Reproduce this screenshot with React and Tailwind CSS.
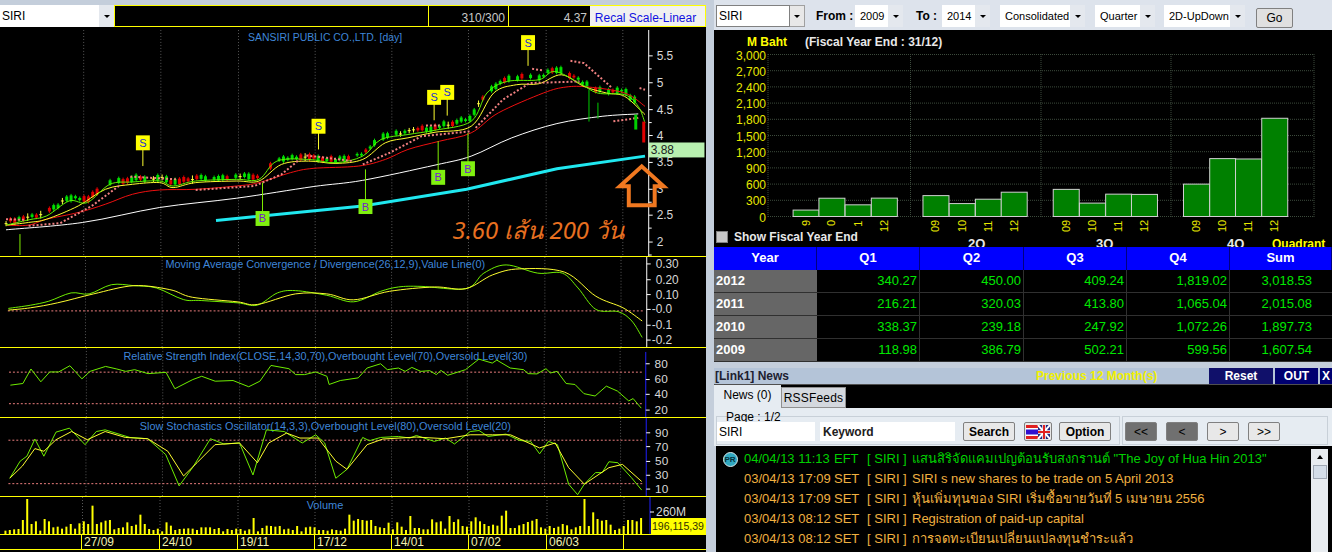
import React from 'react';

// points below were read off zoomed crops: x scale 2.205, y scale 3
const zx = (x) => x / 2.205;
const toPts = (pts, top) => pts.map(([x, y]) => `${zx(x).toFixed(1)},${(y / 3 + top).toFixed(1)}`).join(' ');

// catmull-rom, the moving averages are soft curves in the reference
const toPath = (pts, top) => {
    const p = pts.map(([x, y]) => [zx(x), y / 3 + top]);
    let d = `M${p[0][0].toFixed(1)} ${p[0][1].toFixed(1)}`;
    for (let i = 0; i < p.length - 1; i++) {
        const a = p[Math.max(i - 1, 0)];
        const b = p[i];
        const c = p[i + 1];
        const e = p[Math.min(i + 2, p.length - 1)];
        const c1x = b[0] + (c[0] - a[0]) / 6;
        const c1y = b[1] + (c[1] - a[1]) / 6;
        const c2x = c[0] - (e[0] - b[0]) / 6;
        const c2y = c[1] - (e[1] - b[1]) / 6;
        d += ` C${c1x.toFixed(1)} ${c1y.toFixed(1)} ${c2x.toFixed(1)} ${c2y.toFixed(1)} ${c[0].toFixed(1)} ${c[1].toFixed(1)}`;
    }
    return d;
};

const interp = (pts, x) => {
    for (let i = 1; i < pts.length; i++) {
        if (x <= pts[i][0]) {
            const [x0, y0] = pts[i - 1];
            const [x1, y1] = pts[i];
            return y0 + ((y1 - y0) * (x - x0)) / (x1 - x0);
        }
    }
    return pts[pts.length - 1][1];
};

const RED = [[10,678],[60,678],[100,660],[170,640],[230,615],[290,585],[350,572],[430,570],[520,560],[570,550],[640,520],[690,507],[790,500],[850,480],[900,450],[970,425],[1040,400],[1100,340],[1200,280],[1250,262],[1300,262],[1380,280],[1425,320]];
const YELLOW = [[10,678],[60,670],[100,660],[170,620],[230,570],[290,555],[350,550],[380,565],[430,550],[520,545],[570,545],[620,495],[680,485],[740,492],[800,480],[850,430],[900,415],[960,398],[1040,380],[1090,280],[1140,255],[1190,252],[1240,225],[1290,260],[1340,280],[1380,290],[1425,345]];
const GREEN = [[10,678],[60,662],[100,650],[150,605],[190,610],[240,555],[290,548],[350,545],[380,560],[430,545],[520,540],[570,540],[610,485],[680,480],[740,490],[800,470],[840,420],[900,405],[960,392],[1040,365],[1075,280],[1120,245],[1190,240],[1225,215],[1280,250],[1320,280],[1380,285],[1410,320],[1425,370]];
const WHITE = [[10,692],[180,670],[350,625],[520,597],[690,562],[800,543],[960,497],[1040,470],[1130,415],[1230,372],[1330,350],[1410,343]];
const CYAN = [[475,664],[800,620],[1030,570],[1230,508],[1425,470]];
const SAR = [
    [[10,660],[50,662]],
    [[60,680],[130,672],[200,620],[260,560]],
    [[285,532],[390,540]],
    [[430,572],[560,560],[620,525],[660,480]],
    [[675,468],[780,485]],
    [[800,495],[860,460],[930,410],[1040,395]],
    [[940,378],[970,378]],
    [[1050,385],[1110,300],[1170,250],[1280,245]],
    [[1175,207],[1200,212]],
    [[1260,183],[1290,190],[1350,262]],
    [[1355,365],[1410,355]],
    [[1413,265],[1425,270]],
];

const MACD_G = [[10,162],[60,152],[100,140],[150,115],[190,118],[240,90],[290,93],[340,100],[400,135],[440,138],[520,145],[565,152],[610,115],[650,108],[720,122],[780,142],[840,110],[880,97],[930,95],[1030,102],[1070,55],[1120,30],[1190,55],[1245,55],[1280,100],[1320,165],[1370,172],[1400,200],[1423,250]];
const MACD_Y = [[10,167],[60,160],[120,145],[200,118],[290,93],[370,105],[420,128],[520,142],[565,150],[650,118],[720,118],[780,136],[860,110],[960,97],[1030,102],[1090,60],[1150,42],[1250,52],[1320,125],[1380,160],[1423,200]];
const RSI = [[12,392],[40,387],[58,343],[80,382],[100,352],[120,352],[145,333],[172,373],[190,350],[225,335],[250,343],[270,350],[290,345],[320,357],[360,353],[380,403],[420,375],[440,365],[470,380],[510,378],[545,397],[570,380],[595,332],[635,342],[650,360],[670,360],[695,352],[720,365],[725,390],[750,378],[790,370],[810,340],[840,327],[855,345],[880,340],[895,350],[910,338],[930,350],[950,348],[965,360],[975,347],[990,362],[1030,345],[1060,313],[1090,325],[1100,316],[1130,340],[1160,345],[1170,357],[1190,358],[1210,342],[1220,355],[1235,350],[1255,387],[1275,390],[1295,418],[1320,425],[1345,395],[1370,410],[1395,440],[1405,433],[1423,462]];
const STO_G = [[12,672],[35,620],[50,605],[68,553],[88,605],[115,532],[145,520],[180,570],[205,530],[225,525],[280,548],[320,552],[360,600],[390,695],[420,640],[460,552],[490,568],[525,565],[555,662],[585,525],[625,530],[665,565],[695,540],[715,565],[740,672],[765,645],[800,548],[815,558],[840,548],[880,545],[905,550],[920,542],[960,560],[985,550],[1005,568],[1040,530],[1060,527],[1080,545],[1120,538],[1150,557],[1175,560],[1195,598],[1215,560],[1235,570],[1260,690],[1280,722],[1295,690],[1320,655],[1335,655],[1350,622],[1370,625],[1400,670],[1423,708]];
const STO_Y = [[12,672],[40,635],[68,582],[88,590],[115,555],[150,530],[185,555],[225,530],[270,548],[320,552],[365,590],[400,665],[430,625],[470,570],[525,565],[565,625],[590,565],[630,535],[660,550],[700,550],[740,620],[765,645],[810,570],[845,553],[920,547],[985,552],[1040,540],[1090,540],[1130,540],[1195,580],[1230,565],[1260,640],[1295,690],[1350,640],[1380,630],[1423,682]];

const VOLUME = [10,12,14,15,42,105,30,38,10,45,38,20,22,16,22,30,16,32,38,30,85,30,35,40,42,14,18,20,35,24,28,58,30,15,12,16,8,35,25,12,15,16,17,16,12,20,20,20,15,18,8,15,12,16,15,10,14,48,8,18,25,24,22,24,14,16,12,24,8,20,22,20,12,12,10,14,12,10,16,58,40,45,42,40,42,24,20,18,34,14,35,22,12,54,18,18,14,14,44,35,38,16,54,36,44,24,22,38,50,38,30,24,28,25,55,70,18,18,26,30,36,40,45,20,16,24,18,22,30,26,14,20,24,105,24,65,45,40,42,28,12,16,24,42,42,38,48];

const GRID_X = [82.5, 160, 238, 315, 392, 469, 547, 624];

const SIGNALS_S = [[313, 430, 500], [702, 380, 450], [958, 293, 362], [987, 278, 348], [1166, 128, 198]];
const SIGNALS_B = [[578, 658, 550], [806, 622, 510], [967, 534, 425], [1033, 508, 400]];

const rnd = (i) => {
    const s = Math.sin(i * 12.9898) * 43758.5453;
    return s - Math.floor(s);
};

const Candles = () => {
    const out = [];
    for (let i = 0; i < 146; i++) {
        if (rnd(i + 1100) < 0.12) continue;
        const x = 10 + i * 9.6;
        const mid = interp(GREEN, x) / 3 - 1.5 - rnd(i) * 3;
        const h = 1.5 + rnd(i + 300) * 4.5;
        const kind = rnd(i + 700);
        const px = zx(x);
        const color = kind < 0.55 ? '#00e000' : kind < 0.9 ? '#e00000' : '#ffff40';
        out.push(
            <g key={i}>
                <line x1={px} x2={px} y1={mid - h / 2 - 1.5} y2={mid + h / 2 + 1.5} stroke={color} strokeWidth="1" />
                {kind < 0.9 ? (
                    <rect x={px - 1.5} y={mid - h / 2} width="3" height={h} fill={color} />
                ) : (
                    <line x1={px - 1.5} x2={px + 1.5} y1={mid} y2={mid} stroke={color} />
                )}
            </g>
        );
    }
    return out;
};

const Select = ({ value, className, sunk, pad }) => (
    <div className={`flex items-center h-[22px] shrink-0 ${className}`}>
        <div className={`flex-1 h-full flex items-center bg-white whitespace-nowrap text-black ${pad ? 'pl-[5px] text-[11px]' : 'pl-[2px] text-[12px]'} ${sunk ? 'border border-[#808080]' : ''}`}>{value}</div>
        <div className={`w-[15px] h-full flex items-center justify-center ${sunk ? 'bg-[#e8e8e8] border-y border-r border-[#a0a0a0]' : 'bg-[#e4e8ee]'}`}>
            <div className="w-0 h-0 border-x-[3px] border-x-transparent border-t-[3px] border-t-black" />
        </div>
    </div>
);

const MainChart = () => (
    <svg viewBox="0 27 706 230" className="block w-full h-full">
        {GRID_X.map((x) => (
            <line key={x} x1={x} x2={x} y1="30" y2="257" stroke="#585858" strokeDasharray="1 2" />
        ))}
        <line x1="650" x2="650" y1="30" y2="257" stroke="#ffffff" />
        {[['5.5', 56], ['5', 83], ['4.5', 110], ['4', 136], ['3.5', 163], ['3', 190], ['2.5', 216], ['2', 243]].map(([t, y]) => (
            <g key={t}>
                <line x1="650" x2="654" y1={y} y2={y} stroke="#ffffff" />
                <line x1="650" x2="653" y1={y + 13} y2={y + 13} stroke="#ffffff" />
                <text x="658" y={y + 4} fontSize="12" fill="#d8d8d8">{t}</text>
            </g>
        ))}
        <text x="325" y="41" textAnchor="middle" fontSize="10.5" fill="#3f86d8">SANSIRI PUBLIC CO.,LTD. [day]</text>
        <line x1="18.5" x2="18.5" y1="235" y2="256" stroke="#80f000" />

        <path d={toPath(WHITE, 0)} fill="none" stroke="#ffffff" strokeWidth="1" />
        <Candles />
        <path d={toPath(RED, 0)} fill="none" stroke="#f01010" strokeWidth="1" />
        <path d={toPath(YELLOW, 0)} fill="none" stroke="#ffff30" strokeWidth="1" />
        <path d={toPath(GREEN, 0)} fill="none" stroke="#60f000" strokeWidth="1" />
        <polyline points={toPts(CYAN, 0)} fill="none" stroke="#20e8f0" strokeWidth="3" />
        {SAR.map((s, i) => (
            <polyline key={i} points={toPts(s, 0)} fill="none" stroke="#f08080" strokeWidth="2" strokeDasharray="2 2" />
        ))}
        {/* last sessions drop hard */}
        <rect x="643.5" y="122" width="3" height="21" fill="#e00000" />
        <rect x="635.5" y="115" width="3" height="15" fill="#00d000" />
        <line x1="590" x2="590" y1="90" y2="122" stroke="#00d000" />
        <line x1="599" x2="599" y1="103" y2="119" stroke="#00d000" />

        {SIGNALS_S.map(([x, y, end]) => (
            <g key={x}>
                <line x1={zx(x)} x2={zx(x)} y1={y / 3} y2={end / 3} stroke="#ffff30" />
                <rect x={zx(x) - 7} y={y / 3 - 7.5} width="14" height="15" fill="#ffff00" />
                <text x={zx(x)} y={y / 3 + 4} textAnchor="middle" fontSize="11" fill="#2030d0">S</text>
            </g>
        ))}
        {SIGNALS_B.map(([x, y, start]) => (
            <g key={x}>
                <line x1={zx(x)} x2={zx(x)} y1={start / 3} y2={y / 3} stroke="#80f000" />
                <rect x={zx(x) - 7} y={y / 3 - 7.5} width="14" height="15" fill="#80f010" />
                <text x={zx(x)} y={y / 3 + 4} textAnchor="middle" fontSize="11" fill="#7020d0">B</text>
            </g>
        ))}

        <polygon points="643,167 665,187 656,187 656,206 630,206 630,187 621,187" fill="none" stroke="#f07820" strokeWidth="4" />
        <text x="453" y="240" fontSize="24" fontStyle="italic" fill="#e87020" fontFamily="'Noto Sans','DejaVu Sans',sans-serif">3.60 เส้น 200 วัน</text>

        <rect x="650" y="143" width="56" height="15" fill="#b8f0b0" />
        <text x="652" y="155" fontSize="12" fill="#202020">3.88</text>
    </svg>
);

const MacdChart = () => (
    <svg viewBox="0 257 706 91" className="block w-full h-full">
        {GRID_X.map((x) => (
            <line key={x} x1={x} x2={x} y1="257" y2="348" stroke="#585858" strokeDasharray="1 2" />
        ))}
        <line x1="650" x2="650" y1="257" y2="348" stroke="#ffffff" />
        {[['0.30', 264], ['0.20', 280], ['0.10', 295], ['-0.0', 310], ['-0.1', 326], ['-0.2', 341]].map(([t, y]) => (
            <g key={t}>
                <line x1="650" x2="654" y1={y} y2={y} stroke="#ffffff" />
                <text x={t[0] === '-' ? 655 : 659} y={y + 4} fontSize="12" fill="#d8d8d8">{t}</text>
            </g>
        ))}
        <text x="325" y="268" textAnchor="middle" fontSize="11" fill="#3f86d8">Moving Average Convergence / Divergence(26,12,9),Value Line(0)</text>
        <line x1="4" x2="648" y1="311.5" y2="311.5" stroke="#f08080" strokeDasharray="2 2" />
        <path d={toPath(MACD_G, 255)} fill="none" stroke="#70f000" />
        <path d={toPath(MACD_Y, 255)} fill="none" stroke="#ffff30" />
    </svg>
);

const RsiChart = () => (
    <svg viewBox="0 348 706 70" className="block w-full h-full">
        {GRID_X.map((x) => (
            <line key={x} x1={x} x2={x} y1="348" y2="418" stroke="#585858" strokeDasharray="1 2" />
        ))}
        <line x1="650" x2="650" y1="352" y2="418" stroke="#2020ff" />
        {[['80', 364], ['60', 380], ['40', 395], ['20', 411]].map(([t, y]) => (
            <g key={t}>
                <line x1="650" x2="654" y1={y} y2={y} stroke="#ffffff" />
                <text x="659" y={y + 4} fontSize="12" fill="#d8d8d8">{t}</text>
            </g>
        ))}
        <text x="325" y="360" textAnchor="middle" fontSize="11" fill="#3f86d8">Relative Strength Index(CLOSE,14,30,70),Overbought Level(70),Oversold Level(30)</text>
        <line x1="4" x2="648" y1="372.5" y2="372.5" stroke="#f08080" strokeDasharray="2 2" />
        <line x1="4" x2="648" y1="404.5" y2="404.5" stroke="#f08080" strokeDasharray="2 2" />
        <polyline points={toPts(RSI, 255)} fill="none" stroke="#70f000" />
    </svg>
);

const StochChart = () => (
    <svg viewBox="0 418 706 79" className="block w-full h-full">
        {GRID_X.map((x) => (
            <line key={x} x1={x} x2={x} y1="418" y2="497" stroke="#585858" strokeDasharray="1 2" />
        ))}
        <line x1="650" x2="650" y1="418" y2="497" stroke="#2020ff" />
        {[['90', 433], ['70', 447], ['50', 462], ['30', 476], ['10', 490]].map(([t, y]) => (
            <g key={t}>
                <line x1="650" x2="654" y1={y} y2={y} stroke="#ffffff" />
                <text x="659" y={y + 4} fontSize="12" fill="#d8d8d8">{t}</text>
            </g>
        ))}
        <text x="325" y="430" textAnchor="middle" fontSize="11" textLength="376" fill="#3f86d8">Slow Stochastics Oscillator(14,3,3),Overbought Level(80),Oversold Level(20)</text>
        <line x1="4" x2="648" y1="440.5" y2="440.5" stroke="#f08080" strokeDasharray="2 2" />
        <line x1="4" x2="648" y1="484.5" y2="484.5" stroke="#f08080" strokeDasharray="2 2" />
        <polyline points={toPts(STO_G, 255)} fill="none" stroke="#70f000" />
        <polyline points={toPts(STO_Y, 255)} fill="none" stroke="#ffff30" />
    </svg>
);

const VolumeChart = () => (
    <svg viewBox="0 497 706 37" className="block w-full h-full">
        {GRID_X.map((x) => (
            <line key={x} x1={x} x2={x} y1="497" y2="534" stroke="#585858" strokeDasharray="1 2" />
        ))}
        <line x1="650" x2="650" y1="497" y2="534" stroke="#2020ff" />
        <line x1="650" x2="654" y1="512" y2="512" stroke="#ffffff" />
        <text x="325" y="509" textAnchor="middle" fontSize="11" fill="#3f86d8">Volume</text>
        <text x="656" y="516" fontSize="12" fill="#d8d8d8">260M</text>
        {VOLUME.map((h, i) => (
            <rect key={i} x={zx(12 + i * 9.6) - 1} y={534 - h / 3} width="2" height={h / 3} fill="#ffff00" />
        ))}
        <rect x="651" y="518" width="55" height="16" fill="#ffff00" />
        <text x="652" y="530" fontSize="11" textLength="52" lengthAdjust="spacingAndGlyphs" fill="#303000">196,115,39</text>
    </svg>
);

const DATES = ['27/09', '24/10', '19/11', '17/12', '14/01', '07/02', '06/03'];

const LeftPane = () => (
    <div className="w-[706px] shrink-0 flex flex-col bg-black">
        <div className="h-[27px] shrink-0 flex items-start pt-[5px] bg-[#c4cedb]">
            <Select value="SIRI" className="w-[114px]" />
            <div className="flex-1 h-[22px] flex border border-[#ffff00] bg-black text-[12px] text-[#c8c8c8]">
                <div className="w-[314px] border-r border-[#ffff00]" />
                <div className="w-[80px] border-r border-[#ffff00] flex items-center justify-end pr-[3px] pt-[3px]">310/300</div>
                <div className="w-[81px] flex items-center justify-end pr-[3px] pt-[3px]">4.37</div>
                <div className="flex-1 bg-[#f0f0f0] flex items-center justify-center pt-[3px] pr-[4px] text-[12px] text-[#1010e0]">Recal Scale-Linear</div>
            </div>
        </div>
        <div className="h-[230px] shrink-0 border-b border-[#ffff00]"><MainChart /></div>
        <div className="h-[91px] shrink-0 border-b border-[#ffff00]"><MacdChart /></div>
        <div className="h-[70px] shrink-0 border-b border-[#ffff00]"><RsiChart /></div>
        <div className="h-[79px] shrink-0 border-b border-[#ffff00]"><StochChart /></div>
        <div className="h-[38px] shrink-0 border-b border-[#ffff00]"><VolumeChart /></div>
        <div className="h-[15px] shrink-0 grid grid-cols-[82px_78px_78px_77px_77px_77px_78px_77px] border-b border-[#ffff00] text-[12px] leading-[15px] text-[#f0f0b0]">
            <div className="border-r border-[#ffff00]" />
            {DATES.map((d) => (
                <div key={d} className="border-r border-[#ffff00] pl-[2px]">{d}</div>
            ))}
        </div>
    </div>
);

const BARS = [
    [[208, 118.98], [273, 338.37], [339, 216.21], [405, 340.27]],
    [[535, 386.79], [601, 239.18], [667, 320.03], [732, 450]],
    [[863, 502.21], [929, 247.92], [995, 413.8], [1060, 409.24]],
    [[1191, 599.56], [1257, 1072.26], [1322, 1065.04], [1388, 1819.02]],
];
const rx = (x) => 710 + x / 2.518;
const TICKS = ['3,000', '2,700', '2,400', '2,100', '1,800', '1,500', '1,200', '900', '600', '300', '0'];

const BarChart = () => (
    <svg viewBox="714 30 618 217" className="block w-full h-full">
        <text x="747" y="46" fontSize="12" fontWeight="bold" fill="#ffff00">M Baht</text>
        <text x="805" y="46" fontSize="12" fontWeight="bold" fill="#e8e8e8">(Fiscal Year End : 31/12)</text>
        {TICKS.map((t, i) => {
            const y = 54.5 + i * 16.2;
            return (
                <g key={t}>
                    <line x1="768" x2="1314" y1={y} y2={y} stroke="#3c4a3c" strokeDasharray="1 1" />
                    <text x="766" y={y + 5} textAnchor="end" fontSize="12" fill="#e8e800">{t}</text>
                </g>
            );
        })}
        {[768, 910.5, 1041, 1171, 1314].map((x) => (
            <line key={x} x1={x} x2={x} y1="54" y2="217" stroke="#3c4a3c" strokeDasharray="1 1" />
        ))}
        {BARS.map((group) =>
            group.map(([x, v], i) => {
                const h = (v / 3000) * 162;
                return (
                    <g key={x}>
                        <rect x={rx(x) + 0.5} y={216.5 - h} width="26" height={h} fill="#008000" stroke="#d0d0d0" />
                        <text
                            transform={`translate(${rx(x) + 17},232) rotate(-90)`}
                            fontSize="11"
                            fill="#e8e800"
                        >
                            {['09', '10', '11', '12'][i]}
                        </text>
                    </g>
                );
            })
        )}
        <text x="968" y="248" fontSize="13" fontWeight="bold" fill="#e8e8e8">2Q</text>
        <text x="1096" y="248" fontSize="13" fontWeight="bold" fill="#e8e8e8">3Q</text>
        <text x="1227" y="248" fontSize="13" fontWeight="bold" fill="#e8e8e8">4Q</text>
        <text x="1272" y="248" fontSize="12" fontWeight="bold" fill="#ffff00">Quadrant</text>
    </svg>
);

const TABLE = [
    ['2012', '340.27', '450.00', '409.24', '1,819.02', '3,018.53'],
    ['2011', '216.21', '320.03', '413.80', '1,065.04', '2,015.08'],
    ['2010', '338.37', '239.18', '247.92', '1,072.26', '1,897.73'],
    ['2009', '118.98', '386.79', '502.21', '599.56', '1,607.54'],
];
const COLS = 'grid grid-cols-[103px_103px_104px_103px_103px_102px]';

const FinTable = () => (
    <div className="h-[115px] shrink-0 bg-black">
        <div className={`${COLS} h-[23px] bg-[#0000ff] text-white text-[13px] font-bold leading-[22px] text-center`}>
            {['Year', 'Q1', 'Q2', 'Q3', 'Q4', 'Sum'].map((h) => (
                <div key={h} className="border-r border-[#000080]">{h}</div>
            ))}
        </div>
        {TABLE.map((row) => (
            <div key={row[0]} className={`${COLS} h-[23px] border-b border-[#303030] text-[13px] leading-[22px]`}>
                <div className="bg-[#666666] text-white font-bold pl-[2px]">{row[0]}</div>
                {row.slice(1, 5).map((v, i) => (
                    <div key={i} className="border-r border-[#303030] text-right pr-[2px] text-[#00e800]">{v}</div>
                ))}
                <div className="text-right pr-[20px] text-[#00e800]">{row[5]}</div>
            </div>
        ))}
    </div>
);

const Btn = ({ children, className }) => (
    <button className={`h-[19px] border border-[#808080] rounded-[2px] flex items-center justify-center text-[12px] text-black ${className}`}>
        {children}
    </button>
);

const NEWS = [
    ['04/04/13 11:13', 'EFT', 'แสนสิริจัดแคมเปญต้อนรับสงกรานต์ "The Joy of Hua Hin 2013"', true],
    ['03/04/13 17:09', 'SET', 'SIRI s new shares to be trade on 5 April 2013'],
    ['03/04/13 17:09', 'SET', 'หุ้นเพิ่มทุนของ SIRI เริ่มซื้อขายวันที่ 5 เมษายน 2556'],
    ['03/04/13 08:12', 'SET', 'Registration of paid-up capital'],
    ['03/04/13 08:12', 'SET', 'การจดทะเบียนเปลี่ยนแปลงทุนชำระแล้ว'],
];

const Flag = () => (
    <svg width="24" height="14" viewBox="0 0 24 14">
        <rect width="24" height="14" fill="#ffffff" />
        <rect width="12" height="3" fill="#e02020" />
        <rect y="11" width="12" height="3" fill="#e02020" />
        <rect y="4.5" width="12" height="5" fill="#3010d0" />
        <rect x="12" width="12" height="14" fill="#202880" />
        <path d="M12 0 L24 14 M24 0 L12 14" stroke="#ffffff" strokeWidth="2" />
        <path d="M18 0 V14 M12 7 H24" stroke="#ffffff" strokeWidth="3.5" />
        <path d="M18 0 V14 M12 7 H24" stroke="#e02020" strokeWidth="2" />
    </svg>
);

const NewsPanel = () => (
    <div className="flex-1 flex flex-col min-h-0">
        <div className="h-[17px] shrink-0 flex items-center bg-[#b4c4d8] border-b border-[#505050] pl-[1px] text-[12px] font-bold text-[#202030]">
            <div className="w-[185px] shrink-0">[Link1] News</div>
            <div className="w-[309px] shrink-0 pl-[136px] whitespace-nowrap text-[#f0f000]">Previous 12 Month(s)</div>
            <div className="w-[64px] shrink-0 h-full bg-[#10106a] text-white text-center leading-[16px]">Reset</div>
            <div className="w-[43px] shrink-0 h-full ml-[2px] bg-[#000070] text-white text-center leading-[16px]">OUT</div>
            <div className="w-[12px] shrink-0 h-full ml-[2px] bg-[#000070] text-white text-center leading-[16px]">X</div>
        </div>
        <div className="h-[23px] shrink-0 flex items-end bg-black">
            <div className="w-[67px] h-full bg-[#e6ecf2] text-[12px] text-black text-center leading-[21px]">News (0)</div>
            <div className="w-[65px] h-[21px] bg-[#d4d8de] border border-[#909090] text-[12px] text-black text-center leading-[20px] tracking-[0.2px]">RSSFeeds</div>
        </div>
        <div className="h-[38px] shrink-0 relative flex items-start gap-[5px] bg-[#e6ecf2] pl-[3px] pt-[14px]">
            <div className="absolute left-[2px] top-[8px] w-[404px] h-[29px] border border-[#c8d0d8]" />
            <div className="absolute left-[408px] top-[8px] w-[206px] h-[29px] border border-[#c8d0d8]" />
            <div className="absolute left-[11px] top-[2px] px-[1px] text-[12px] leading-[14px] text-black">Page : 1/2</div>
            <div className="relative w-[98px] h-[19px] bg-white pl-[2px] text-[12px] font-medium leading-[20px] text-black">SIRI</div>
            <div className="relative w-[135px] h-[19px] bg-white pl-[3px] text-[12px] font-bold leading-[20px] text-[#202020]">Keyword</div>
            <Btn className="relative w-[52px] ml-[3px] bg-[#e8e8e8] font-bold">Search</Btn>
            <div className="relative w-[28px] h-[19px] ml-[4px] border border-[#808080] rounded-[2px] flex items-center justify-center bg-[#e8e8e8]"><Flag /></div>
            <Btn className="relative w-[52px] ml-[2px] bg-[#e8e8e8] font-bold">Option</Btn>
            <Btn className="relative w-[32px] ml-[9px] bg-[#707070]">&lt;&lt;</Btn>
            <Btn className="relative w-[32px] ml-[4px] bg-[#707070]">&lt;</Btn>
            <Btn className="relative w-[32px] ml-[4px] bg-[#e8e8e8]">&gt;</Btn>
            <Btn className="relative w-[32px] ml-[4px] bg-[#e8e8e8]">&gt;&gt;</Btn>
        </div>
        <div className="flex-1 min-h-0 flex overflow-hidden bg-black ml-[2px] pt-[2px]">
            <div className="flex-1 pt-[1px] font-['Liberation_Sans','Noto_Sans','DejaVu_Sans',sans-serif] text-[13px] leading-[20px]">
                {NEWS.map(([time, src, title, first]) => (
                    <div key={title} className={`flex h-[20px] whitespace-nowrap ${first ? 'text-[#00d000]' : 'text-[#f0b040]'}`}>
                        <div className="w-[28px] flex items-center justify-center">
                            {first && (
                                <div className="w-[15px] h-[15px] rounded-full bg-[#30a8c0] border border-[#d8e8ec] text-[8px] font-bold leading-[13px] text-center text-[#04303c]">PR</div>
                            )}
                        </div>
                        <div className="w-[90px]">{time}</div>
                        <div className="w-[33px]">{src}</div>
                        <div className="w-[45px]">[ SIRI ]</div>
                        <div>{title}</div>
                    </div>
                ))}
            </div>
            <div className="w-[17px] shrink-0 mr-[4px] mt-[1px] bg-[#e8ecf0] flex flex-col items-center pt-[6px]">
                <div className="w-0 h-0 border-x-[3px] border-x-transparent border-b-[4px] border-b-black" />
                <div className="w-[14px] h-[14px] mt-[6px] bg-[#d4dde8] border border-[#a0a8b4]" />
            </div>
        </div>
    </div>
);

const RightPane = () => (
    <div className="w-[618px] shrink-0 flex flex-col">
        <div className="h-[30px] shrink-0 flex items-center pt-[2px] bg-[#dde3ec] text-[12px] text-black">
            <Select value="SIRI" className="w-[89px] ml-[2px]" sunk />
            <span className="ml-[11px] w-[39px] shrink-0 font-bold">From :</span>
            <Select value="2009" className="w-[48px]" pad />
            <span className="ml-[13px] w-[26px] shrink-0 font-bold">To :</span>
            <Select value="2014" className="w-[48px]" pad />
            <Select value="Consolidated" className="w-[85px] ml-[10px]" pad />
            <Select value="Quarter" className="w-[60px] ml-[10px]" pad />
            <Select value="2D-UpDown" className="w-[81px] ml-[9px]" pad />
            <button className="w-[37px] h-[20px] mt-[3px] ml-[11px] shrink-0 border border-[#808080] rounded-[2px] bg-[#e0e0e0] text-[12px]">Go</button>
        </div>
        <div className="h-[217px] shrink-0 relative bg-black overflow-hidden">
            <BarChart />
            <div className="absolute left-0 bottom-0 w-[156px] h-[21px] bg-black flex items-center pl-[2px] text-[12px] font-bold text-[#e8e8e8]">
                <div className="w-[12px] h-[12px] bg-[#c8c8c8] border border-[#808080] mr-[6px]" />
                Show Fiscal Year End
            </div>
        </div>
        <FinTable />
        <div className="h-[6px] shrink-0" />
        <NewsPanel />
    </div>
);

export default function App() {
    return (
        <div className="w-[1332px] h-[552px] flex justify-between overflow-hidden bg-[#c4cedb] font-['Liberation_Sans',Arial,sans-serif]">
            <LeftPane />
            <RightPane />
        </div>
    );
}
